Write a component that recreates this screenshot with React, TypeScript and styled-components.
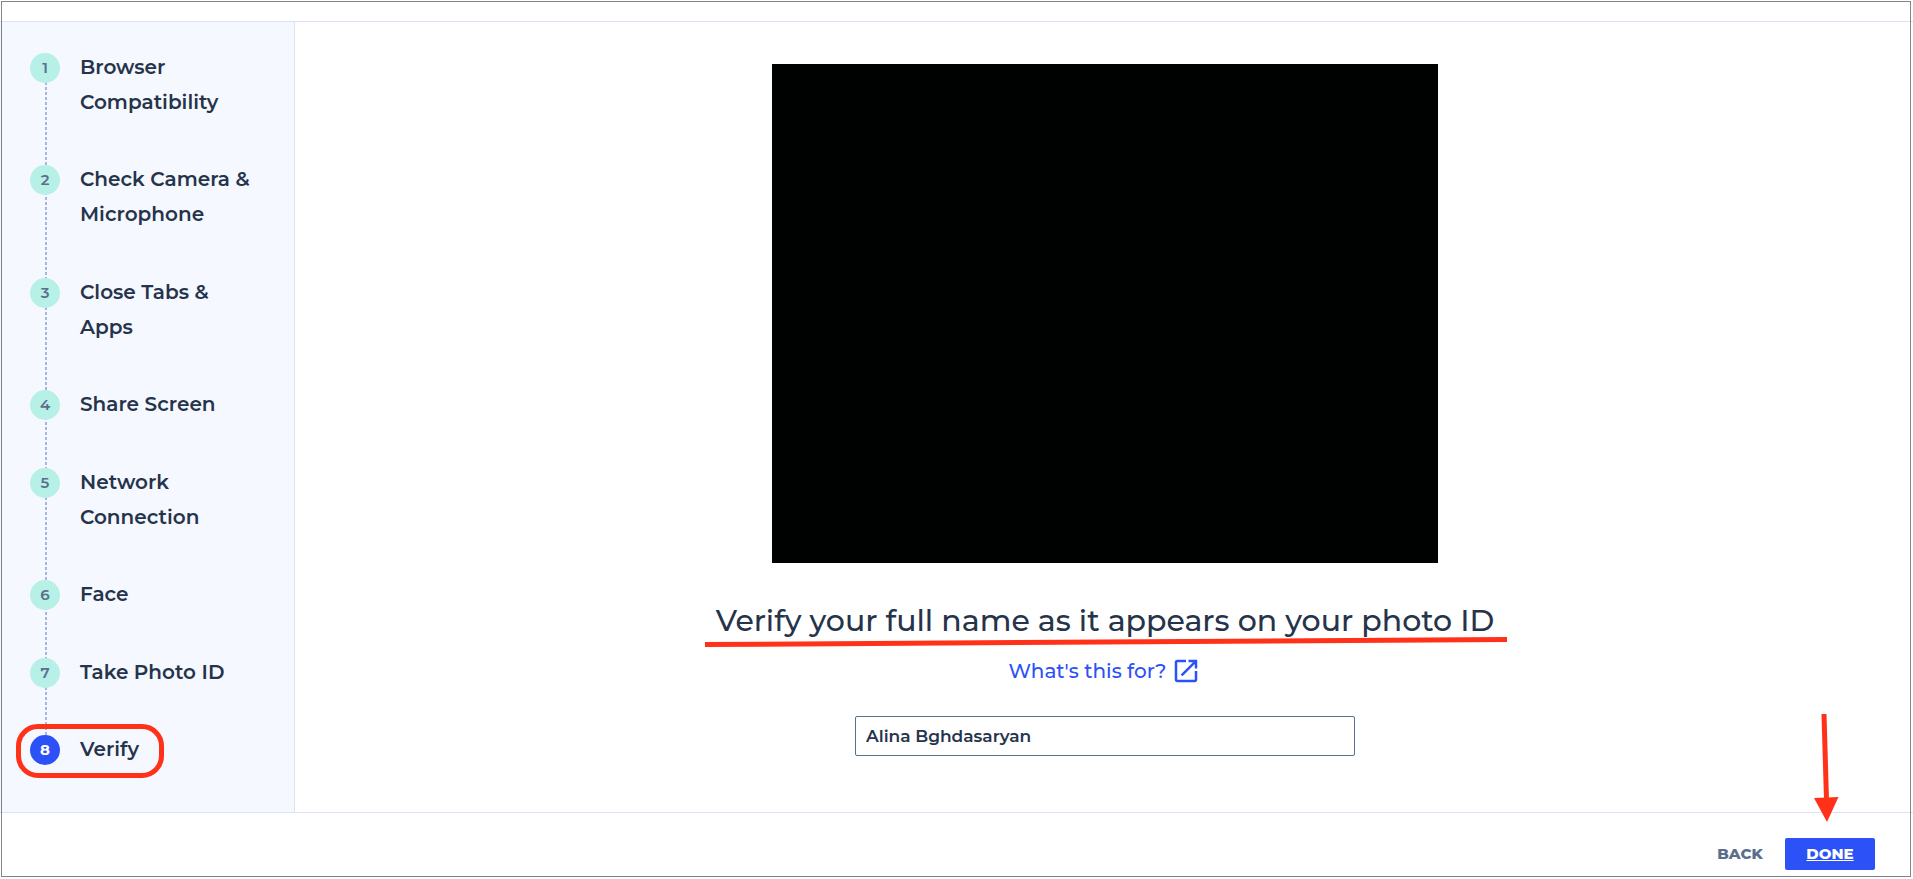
import React from "react";
import styled, { createGlobalStyle } from "styled-components";

const color = {
  ink: "#26344b",
  muted: "#5b6e8c",
  blue: "#2c51f7",
  mint: "#b7f0e6",
  panel: "#f5f8ff",
  line: "#dbe1f7",
  dash: "#a9b5de",
  mark: "#ff3119",
  frame: "#808388",
};

const GlobalStyle = createGlobalStyle`
  *, *::before, *::after { box-sizing: border-box; }
  body {
    margin: 0;
    background: #fff;
    color: ${color.ink};
    font-family: Gotham, Montserrat, Inter, "Liberation Sans", sans-serif;
    font-weight: 600;
  }
`;

const Page = styled.div`
  position: relative;
  display: flex;
  flex-direction: column;
  min-height: 100vh;
`;

const Frame = styled.div`
  position: absolute;
  inset: 1px 2px 2px 1px;
  border: 1px solid ${color.frame};
  pointer-events: none;
`;

const TopBar = styled.header`
  height: 22px;
  border-bottom: 1px solid ${color.line};
`;

const Body = styled.div`
  flex: 1;
  display: flex;
`;

const Sidebar = styled.nav`
  display: flex;
  width: 295px;
  padding: 28px 32px 45px 30px;
  background: ${color.panel};
  border-right: 1px solid ${color.line};
`;

const StepList = styled.ol`
  flex: 1;
  display: flex;
  flex-direction: column;
  justify-content: space-between;
  margin: 0;
  padding: 0;
  list-style: none;
  background:
    linear-gradient(${color.panel}, ${color.panel}) 0 0 / 100% 12px no-repeat,
    linear-gradient(${color.panel}, ${color.panel}) 0 100% / 100% 12px no-repeat,
    linear-gradient(${color.dash} 3px, transparent 3px) 15px 2px / 2px 5px repeat-y;
`;

const Step = styled.li`
  position: relative;
  display: flex;
  align-items: flex-start;
  gap: 20px;
`;

const StepNumber = styled.span<{ $current: boolean }>`
  flex: none;
  width: 30px;
  height: 30px;
  margin-top: 3px;
  border-radius: 50%;
  background: ${(p) => (p.$current ? color.blue : color.mint)};
  color: ${(p) => (p.$current ? "#fff" : color.muted)};
  font-size: 15px;
  font-weight: ${(p) => (p.$current ? 700 : 600)};
  line-height: 30px;
  text-align: center;
`;

const StepLabel = styled.span`
  font-size: 20px;
  line-height: 35px;
  white-space: nowrap;
`;

const StepHighlight = styled.span`
  position: absolute;
  top: -8px;
  left: -14px;
  width: 148px;
  height: 54px;
  border: 5px solid ${color.mark};
  border-radius: 22px;
`;

const Content = styled.main`
  flex: 1;
  display: flex;
  flex-direction: column;
  align-items: center;
  padding: 42px 24px 56px 26px;
`;

const CameraView = styled.div`
  width: 666px;
  max-width: 100%;
  height: 499px;
  background: #000201;
`;

const Title = styled.h1`
  position: relative;
  margin: 38px 0 0;
  font-size: 30px;
  font-weight: 500;
  line-height: 40px;
`;

const TitleUnderline = styled.svg`
  position: absolute;
  top: 35px;
  left: 50%;
  width: 804px;
  height: 12px;
  transform: translateX(-50%);
`;

const HelpLink = styled.a`
  display: flex;
  align-items: center;
  gap: 5px;
  margin-top: 15px;
  color: ${color.blue};
  font-size: 20px;
  font-weight: 500;
  line-height: 30px;
  text-decoration: none;
`;

const NameInput = styled.input`
  width: 500px;
  max-width: 100%;
  height: 40px;
  margin-top: 30px;
  padding: 0 10px;
  border: 1px solid ${color.muted};
  border-radius: 2px;
  background: #fff;
  color: ${color.ink};
  font: inherit;
  font-size: 17px;
`;

const Footer = styled.footer`
  position: relative;
  display: flex;
  justify-content: flex-end;
  align-items: flex-start;
  height: 67px;
  padding: 25px 38px 0 0;
  border-top: 1px solid ${color.line};
`;

const ActionButton = styled.button<{ $primary?: boolean }>`
  width: 90px;
  height: 32px;
  padding: 0 0 2px;
  border: 0;
  border-radius: 2px;
  background: ${(p) => (p.$primary ? color.blue : "transparent")};
  color: ${(p) => (p.$primary ? "#fff" : color.muted)};
  font: inherit;
  font-size: 15px;
  font-weight: 800;
  text-decoration: ${(p) => (p.$primary ? "underline" : "none")};
  cursor: pointer;
`;

const Arrow = styled.svg`
  position: absolute;
  right: 73px;
  bottom: 57px;
  width: 28px;
  height: 108px;
`;

const steps: string[][] = [
  ["Browser", "Compatibility"],
  ["Check Camera &", "Microphone"],
  ["Close Tabs &", "Apps"],
  ["Share Screen"],
  ["Network", "Connection"],
  ["Face"],
  ["Take Photo ID"],
  ["Verify"],
];

export default function App() {
  const current = steps.length - 1;
  return (
    <Page>
      <GlobalStyle />
      <TopBar />
      <Body>
        <Sidebar aria-label="Setup steps">
          <StepList>
            {steps.map((lines, i) => (
              <Step key={lines[0]} aria-current={i === current ? "step" : undefined}>
                <StepNumber $current={i === current}>{i + 1}</StepNumber>
                <StepLabel>
                  {lines.map((text, n) => (
                    <React.Fragment key={text}>
                      {n > 0 && <br />}
                      {text}
                    </React.Fragment>
                  ))}
                </StepLabel>
                {i === current && <StepHighlight />}
              </Step>
            ))}
          </StepList>
        </Sidebar>
        <Content>
          <CameraView />
          <Title id="name-title">
            Verify your full name as it appears on your photo ID
            <TitleUnderline viewBox="0 0 804 12" aria-hidden="true">
              <path d="M2 8.5 L804 3.5" stroke={color.mark} strokeWidth="5" />
            </TitleUnderline>
          </Title>
          <HelpLink href="#help">
            What's this for?
            <svg width="30" height="30" viewBox="0 0 24 24" fill={color.blue} aria-hidden="true">
              <path d="M19 19H5V5h7V3H5c-1.11 0-2 .9-2 2v14c0 1.1.89 2 2 2h14c1.1 0 2-.9 2-2v-7h-2v7zM14 3v2h3.59l-9.83 9.83 1.41 1.41L19 6.41V10h2V3h-7z" />
            </svg>
          </HelpLink>
          <NameInput type="text" aria-labelledby="name-title" defaultValue="Alina Bghdasaryan" />
        </Content>
      </Body>
      <Footer>
        <ActionButton type="button">BACK</ActionButton>
        <ActionButton type="button" $primary>
          DONE
        </ActionButton>
        <Arrow viewBox="0 0 28 108" aria-hidden="true">
          <path d="M12 0 L14.5 86" stroke={color.mark} strokeWidth="5" />
          <path d="M2 84 L26.5 83 L15 108 Z" fill={color.mark} />
        </Arrow>
      </Footer>
      <Frame />
    </Page>
  );
}
